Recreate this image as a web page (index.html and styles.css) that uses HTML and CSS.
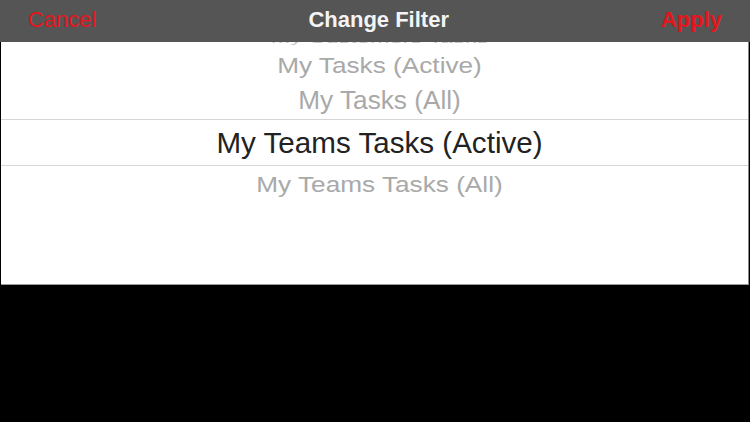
FILE: index.html
```html
<!DOCTYPE html>
<html lang="en">
<head>
  <meta charset="UTF-8">
  <meta name="viewport" content="width=device-width, initial-scale=1.0">
  <title>Change Filter</title>
<link rel="stylesheet" href="styles.css">
</head>
<body>
<div class="screen">
    <div class="header">
        <span class="btn cancel">Cancel</span>
        <span class="title">Change Filter</span>
        <span class="btn apply">Apply</span>
    </div>
    <div class="picker">
        <div class="list">
            <div class="row r0"><span>My Customers Tasks</span></div>
            <div class="row r1"><span>My Tasks (Active)</span></div>
            <div class="row r2"><span>My Tasks (All)</span></div>
            <div class="row selected"><span>My Teams Tasks (Active)</span></div>
            <div class="row r4"><span>My Teams Tasks (All)</span></div>
        </div>
    </div>
</div>
</body></html>
```
FILE: styles.css
```css
body {
    margin: 0;
    background-color: #000;
    font-family: "Liberation Sans", Arial, sans-serif;
}
.screen {
    width: 750px;
    height: 422px;
    overflow: hidden;
}
.header {
    height: 42px;
    background-color: #555555;
    display: flex;
    align-items: center;
    justify-content: space-between;
    padding: 0 28px 2px 28px;
    box-sizing: border-box;
    position: relative;
    z-index: 2;
}
.btn {
    color: #e3161d;
    font-size: 22px;
}
.apply {
    font-weight: bold;
}
.title {
    color: #f4f4f4;
    font-size: 22px;
    font-weight: bold;
}
.picker {
    height: 242px;
    margin-left: 1px;
    width: 747px;
    background-color: #fff;
    border-bottom: 1px solid #9a9a9a;
    border-right: 1px solid #8a8a8a;
    overflow: hidden;
}
.list {
    margin-top: -15px;
    padding-left: 10px;
    display: flex;
    flex-direction: column;
}
.row {
    display: flex;
    align-items: center;
    justify-content: center;
    color: #a9a9a9;
    font-size: 26.2px;
    white-space: nowrap;
}
.row span {
    display: inline-block;
}
.r0 {
    height: 24px;
    font-size: 23.5px;
    color: #c2c2c2;
}
.r0 span {
    transform: scaleY(0.5);
}
.r1 {
    height: 30px;
}
.r1 span {
    transform: scaleY(0.82);
}
.r2 {
    height: 38px;
}
.r2 span {
    transform: scaleY(0.95);
}
.selected {
    height: 45px;
    margin-left: -10px;
    border-top: 1px solid #d6d6d6;
    border-bottom: 1px solid #d6d6d6;
    color: #222;
    font-size: 29.6px;
    box-sizing: content-box;
}
.selected span {
    margin-left: 10px;
}
.r4 {
    height: 38px;
}
.r4 span {
    transform: scaleY(0.82);
}
```
